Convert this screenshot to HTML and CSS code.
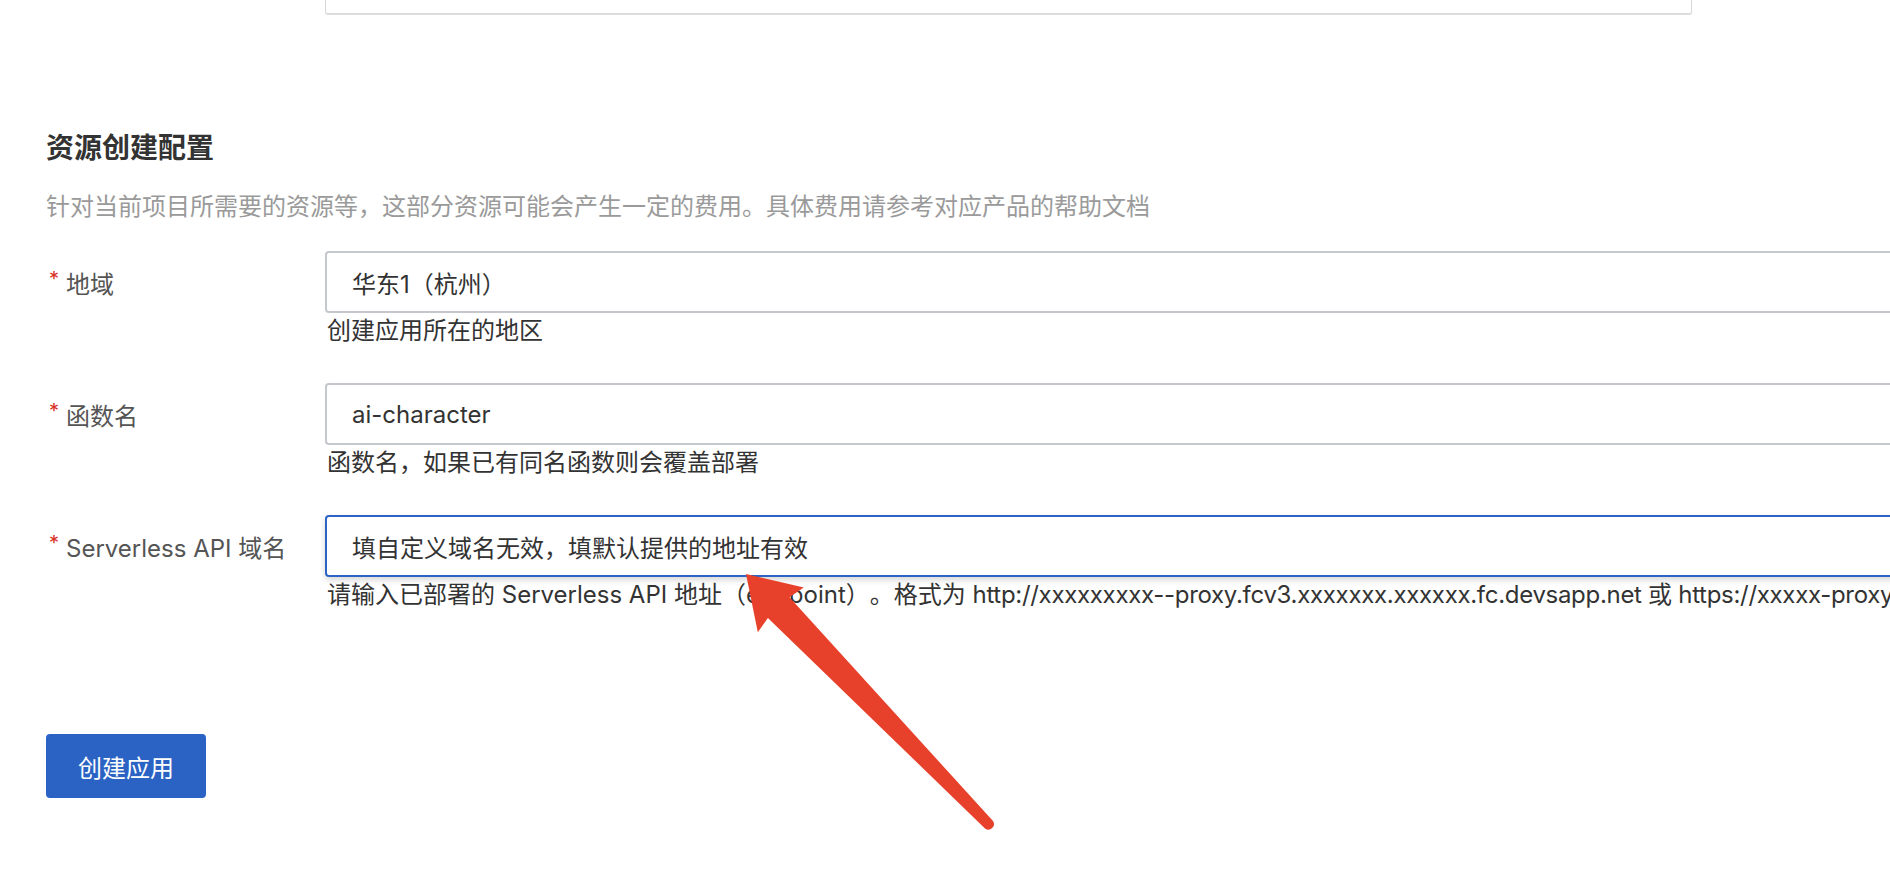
FILE: index.html
```html
<!DOCTYPE html>
<html lang="zh-CN">
<head>
  <meta charset="UTF-8" />
  <meta name="viewport" content="width=device-width, initial-scale=1" />
  <title>资源创建配置</title>
  <link rel="stylesheet" href="styles.css">
</head>
<body>
<div class="page">

  <div class="prev-box"></div>

  <h2 class="section-title">资源创建配置</h2>
  <p class="section-desc">针对当前项目所需要的资源等，这部分资源可能会产生一定的费用。具体费用请参考对应产品的帮助文档</p>

  <div class="form">
    <div class="form-row">
      <label class="form-label"><span class="req">*</span>地域</label>
      <div class="form-control">
        <input class="input" type="text" value="华东1（杭州）">
        <div class="help">创建应用所在的地区</div>
      </div>
    </div>

    <div class="form-row">
      <label class="form-label"><span class="req">*</span>函数名</label>
      <div class="form-control">
        <input class="input" type="text" value="ai-character">
        <div class="help">函数名，如果已有同名函数则会覆盖部署</div>
      </div>
    </div>

    <div class="form-row">
      <label class="form-label"><span class="req">*</span>Serverless API 域名</label>
      <div class="form-control">
        <input class="input is-focused" type="text" value="填自定义域名无效，填默认提供的地址有效">
        <div class="help">请输入已部署的 Serverless API 地址（endpoint）。格式为 <span class="url">http://xxxxxxxxx--proxy.fcv3.xxxxxxx.xxxxxx.fc.devsapp.net 或 https://xxxxx-proxy.xxxxxx.xxxxxx.fcapp.run</span></div>
      </div>
    </div>
  </div>

  <button class="btn-primary" type="button">创建应用</button>

  <!-- red annotation arrow drawn over the screenshot -->
  <svg class="annotation" width="1890" height="884" viewBox="0 0 1890 884">
    <path d="M746 574 L803.8 587.6 L789.5 597.3 L992.8 820.8 A5.5 5.5 0 0 1 985 828.4 L767.9 618.1 L757.8 632.2 Z" fill="#e8412b"/>
  </svg>

</div>
</body>
</html>
```

FILE: styles.css
```css
body {
  margin: 0;
  background: #fff;
  font-family: Inter, "Noto Sans CJK SC", sans-serif;
  color: #333;
  text-spacing-trim: space-all;
}

.page {
  position: relative;
  width: 1890px;
  height: 884px;
  padding-left: 46px;
  box-sizing: border-box;
  overflow: hidden;
}

.prev-box {
  width: 1367px;
  height: 60px;
  margin: -45px 0 0 279px;
  box-sizing: border-box;
  border: 1px solid #d6d6d6;
  border-bottom: 2px solid #dcdcdc;
  border-radius: 3px;
}

.section-title {
  margin: 113px 0 0;
  font-size: 28px;
  line-height: 40px;
  font-weight: 700;
  color: #333;
}

.section-desc {
  margin: 21px 0 0;
  font-size: 24px;
  line-height: 36px;
  color: #9a9a9a;
}

.form {
  margin-top: 26px;
  display: flex;
  flex-direction: column;
  gap: 34px;
}

.form-row {
  display: flex;
}

.form-label {
  width: 279px;
  flex: none;
  height: 62px;
  display: flex;
  align-items: center;
  font-size: 24px;
  color: #555;
}

.req {
  color: #d93026;
  font-size: 20px;
  margin: 0 7px 6px 3px;
}

.form-control {
  width: 1700px;
  flex: none;
}

.input {
  display: block;
  width: 100%;
  height: 62px;
  box-sizing: border-box;
  padding: 0 25px;
  border: 2px solid #c4c7cc;
  border-radius: 4px;
  font-family: inherit;
  font-size: 24px;
  color: #333;
  background: #fff;
  outline: none;
  text-spacing-trim: space-all;
}

.input.is-focused {
  border-color: #2c63c4;
  box-shadow: 0 3px 6px rgba(0, 0, 0, 0.16);
}

.help {
  font-size: 24px;
  line-height: 36px;
  color: #333;
  white-space: nowrap;
  padding-left: 2px;
}

.help .url {
  letter-spacing: -0.3px;
}

.btn-primary {
  margin-top: 121px;
  width: 160px;
  height: 64px;
  border: none;
  border-radius: 4px;
  background: #2b63c4;
  color: #fff;
  font-family: inherit;
  font-size: 24px;
  cursor: pointer;
}

.annotation {
  position: absolute;
  top: 0;
  left: 0;
  pointer-events: none;
}
```
